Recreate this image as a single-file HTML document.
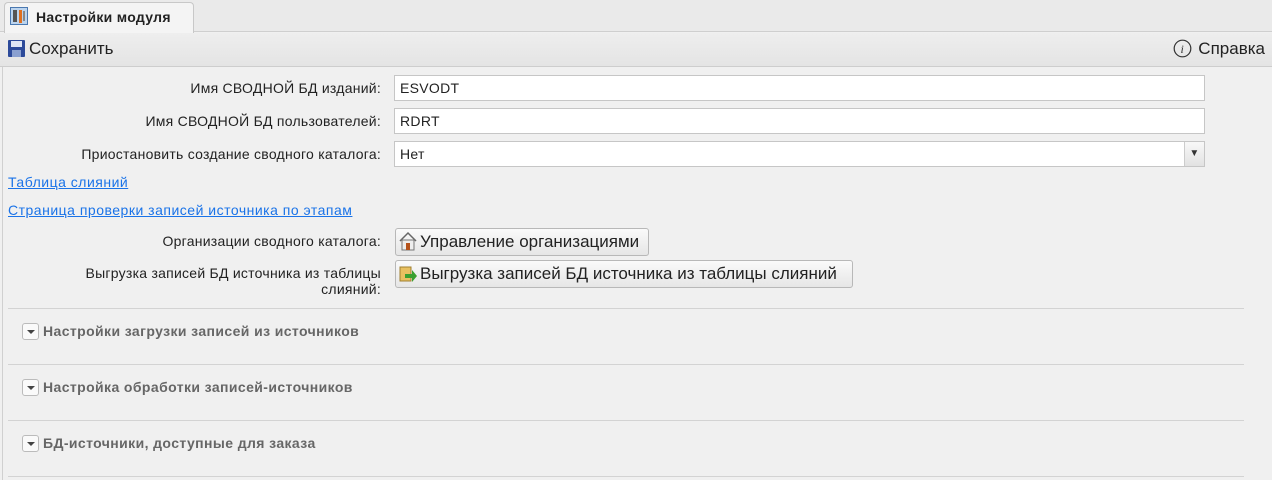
<!DOCTYPE html>
<html><head><meta charset="utf-8"><style>
*{box-sizing:border-box}
body{margin:0;width:1272px;height:480px;background:#f0f0f0;font-family:"Liberation Sans",sans-serif;font-size:13px;color:#222;overflow:hidden;position:relative}
.abs{position:absolute}
.tabbar{left:0;top:0;width:1272px;height:32px;background:#eaeaea;border-bottom:1px solid #cfcfcf}
.tab{left:4px;top:2px;width:190px;height:31px;background:#f4f4f4;border:1px solid #c8c8c8;border-bottom:none;border-radius:4px 4px 0 0;font-weight:bold;font-size:14px;line-height:28px;padding-left:31px;letter-spacing:0.3px}
.toolbar{left:0;top:33px;width:1272px;height:34px;background:linear-gradient(#eeeeee,#e4e4e4);border-bottom:1px solid #cdcdcd;font-size:17px;line-height:32px}
.lbl{right:891px;text-align:right;font-size:14px;letter-spacing:0.25px}
.inp{left:394px;width:811px;height:26px;background:#fff;border:1px solid #c6c6c6;padding-left:5px;line-height:24px;font-size:14px;letter-spacing:0.3px}
a{color:#1a73e8;text-decoration:underline;font-size:14px;letter-spacing:0.5px}
.btn{left:395px;height:28px;border:1px solid #b8b8b8;border-radius:3px;background:linear-gradient(#fafafa,#e6e6e6);font-size:17px;line-height:26px;padding-left:24px;padding-right:4px;white-space:nowrap}
.sep{left:8px;width:1236px;height:1px;background:#d3d3d3}
.sec{left:22px;font-weight:bold;color:#666;font-size:14px;letter-spacing:0.4px}
.sec .ar{display:inline-block;width:17px;height:17px;border:1px solid #bbb;border-radius:3px;background:#fafafa;vertical-align:middle;margin-right:4px;position:relative;top:-1px}
.sec .ar:after{content:"";position:absolute;left:4px;top:6px;border-left:4px solid transparent;border-right:4px solid transparent;border-top:4px solid #444}
</style></head><body>
<div class="abs tabbar"></div>
<div class="abs tab">Настройки модуля</div>
<svg class="abs" style="left:10px;top:7px" width="18" height="18"><rect x="0.5" y="0.5" width="17" height="17" fill="#bcd4ee" stroke="#4a78b0"/><rect x="3" y="3" width="4" height="12" fill="#555"/><rect x="9" y="3" width="3" height="13" fill="#e07020"/><rect x="13" y="4" width="2" height="10" fill="#888"/></svg>
<div class="abs toolbar"><span style="position:absolute;left:29px;top:0">Сохранить</span><span style="position:absolute;right:7px;top:0">Справка</span></div>
<svg class="abs" style="left:8px;top:40px" width="17" height="17"><rect x="0" y="0" width="17" height="17" rx="1" fill="#2c4a9a"/><rect x="3" y="1" width="11" height="6" fill="#dfe6f5"/><rect x="4" y="10" width="9" height="7" fill="#8aa0d0"/></svg>
<svg class="abs" style="left:1173px;top:39px" width="19" height="19"><circle cx="9.5" cy="9.5" r="8.3" fill="none" stroke="#333" stroke-width="1.2"/><text x="7.5" y="14" font-family="Liberation Serif" font-style="italic" font-size="12" fill="#333">i</text></svg>
<div class="abs" style="left:2px;top:67px;width:1px;height:413px;background:#d0d0d0"></div>
<div class="abs lbl" style="top:80px">Имя СВОДНОЙ БД изданий:</div>
<div class="abs inp" style="top:75px">ESVODT</div>
<div class="abs lbl" style="top:113px">Имя СВОДНОЙ БД пользователей:</div>
<div class="abs inp" style="top:108px">RDRT</div>
<div class="abs lbl" style="top:146px">Приостановить создание сводного каталога:</div>
<div class="abs inp" style="top:141px">Нет<span style="position:absolute;right:0;top:0;width:20px;height:24px;background:linear-gradient(#f8f8f8,#e2e2e2);border-left:1px solid #ccc;text-align:center;font-size:10px;color:#333">&#9660;</span></div>
<a class="abs" style="left:8px;top:174px">Таблица слияний</a>
<a class="abs" style="left:8px;top:202px">Страница проверки записей источника по этапам</a>
<div class="abs lbl" style="top:233px">Организации сводного каталога:</div>
<div class="abs btn" style="top:228px;width:254px">Управление организациями</div>
<svg class="abs" style="left:398px;top:231px" width="20" height="20"><path d="M2 10 L10 2 L18 10" fill="none" stroke="#666" stroke-width="1.5"/><rect x="4" y="9" width="12" height="10" fill="#eee" stroke="#777"/><rect x="8" y="12" width="4" height="7" fill="#b5531c"/></svg>
<div class="abs lbl" style="top:265px;line-height:16px">Выгрузка записей БД источника из таблицы<br>слияний:</div>
<div class="abs btn" style="top:260px;width:458px">Выгрузка записей БД источника из таблицы слияний</div>
<svg class="abs" style="left:398px;top:264px" width="20" height="20"><rect x="2" y="3" width="11" height="14" fill="#e8c060" stroke="#a08030"/><path d="M7 10 h7 v-4 l5 6 l-5 6 v-4 h-7z" fill="#3aa030"/></svg>
<div class="abs sep" style="top:308px"></div>
<div class="abs sec" style="top:323px"><span class="ar"></span>Настройки загрузки записей из источников</div>
<div class="abs sep" style="top:364px"></div>
<div class="abs sec" style="top:379px"><span class="ar"></span>Настройка обработки записей-источников</div>
<div class="abs sep" style="top:420px"></div>
<div class="abs sec" style="top:435px"><span class="ar"></span>БД-источники, доступные для заказа</div>
<div class="abs sep" style="top:476px"></div>
</body></html>
